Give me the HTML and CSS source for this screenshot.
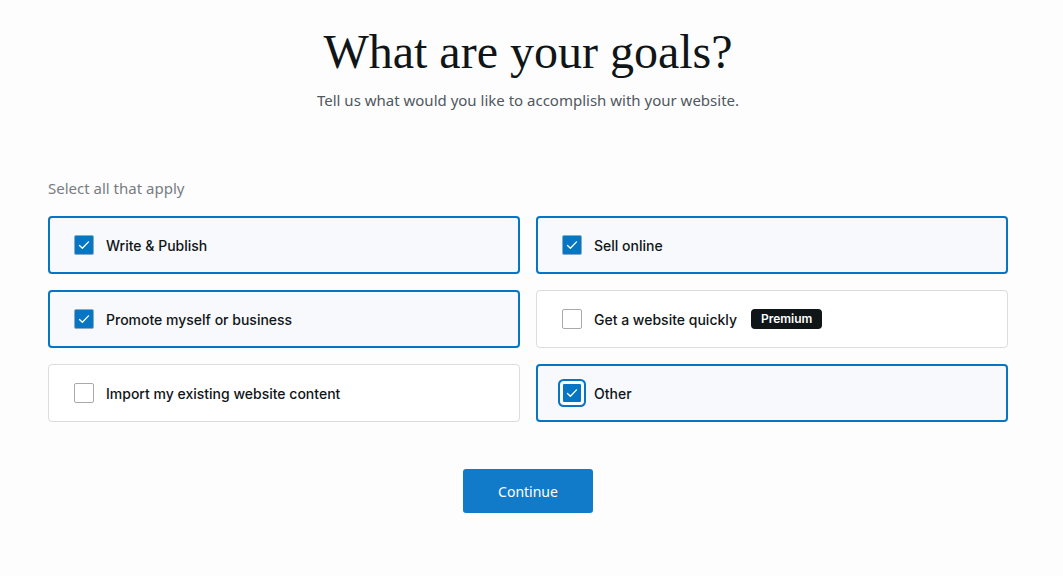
FILE: index.html
```html
<!DOCTYPE html>
<html lang="en">
<head>
<meta charset="utf-8">
<title>Goals</title>
<link rel="stylesheet" href="styles.css">
</head>
<body>
<main class="page">
  <header class="head">
    <h1 class="title">What are your goals?</h1>
    <p class="subtitle">Tell us what would you like to accomplish with your website.</p>
  </header>
  <section class="goals">
    <p class="hint">Select all that apply</p>
    <div class="grid">
      <label class="card selected">
        <span class="box checked"><svg viewBox="0 0 20 20"><path d="M5 10.5l3.2 3.2L15 6.5"/></svg></span>
        <span class="label">Write &amp; Publish</span>
      </label>
      <label class="card selected">
        <span class="box checked"><svg viewBox="0 0 20 20"><path d="M5 10.5l3.2 3.2L15 6.5"/></svg></span>
        <span class="label">Sell online</span>
      </label>
      <label class="card selected">
        <span class="box checked"><svg viewBox="0 0 20 20"><path d="M5 10.5l3.2 3.2L15 6.5"/></svg></span>
        <span class="label">Promote myself or business</span>
      </label>
      <label class="card">
        <span class="box"></span>
        <span class="label">Get a website quickly</span>
        <span class="badge">Premium</span>
      </label>
      <label class="card">
        <span class="box"></span>
        <span class="label">Import my existing website content</span>
      </label>
      <label class="card selected">
        <span class="box checked focus"><svg viewBox="0 0 20 20"><path d="M5 10.5l3.2 3.2L15 6.5"/></svg></span>
        <span class="label">Other</span>
      </label>
    </div>
  </section>
  <div class="actions">
    <button class="continue">Continue</button>
  </div>
</main>
</body>
</html>
```
FILE: styles.css
```css
* { box-sizing: border-box; }
html, body { margin: 0; padding: 0; }
body {
  background: #fdfdfd;
  font-family: Inter, "Noto Sans", sans-serif;
  color: #101517;
}
.page {
  width: 960px;
  margin: 0 48px;
  padding-top: 26px;
}
.head { text-align: center; }
.title {
  margin: 0;
  font-family: "Liberation Serif", serif;
  font-weight: 400;
  font-size: 48px;
  line-height: 52px;
  color: #101517;
}
.subtitle {
  margin: 10px 0 0;
  font-family: "Noto Sans", sans-serif;
  font-size: 15px;
  line-height: 24px;
  color: #50575e;
}
.goals { margin-top: 64px; }
.hint {
  margin: 0 0 16px;
  font-family: "Noto Sans", sans-serif;
  font-size: 15px;
  line-height: 24px;
  color: #787c82;
}
.grid {
  display: grid;
  grid-template-columns: 1fr 1fr;
  column-gap: 16px;
  row-gap: 16px;
}
.card {
  display: flex;
  align-items: center;
  height: 58px;
  padding: 0 24px 0 25px;
  border: 1px solid #dcdcde;
  border-radius: 4px;
  background: #fff;
  font-size: 14px;
  font-weight: 500;
  cursor: pointer;
}
.card.selected {
  border: 2px solid #0675c4;
  background: #f7f9fc;
  padding-left: 24px;
}
.box {
  width: 20px;
  height: 20px;
  flex: none;
  border: 1px solid #a7aaad;
  border-radius: 2px;
  background: #fff;
  margin-right: 12px;
  display: flex;
  align-items: center;
  justify-content: center;
}
.box.checked {
  background: #0675c4;
  border-color: #8aa9c2;
}
.box svg { width: 18px; height: 18px; }
.box svg path {
  fill: none;
  stroke: #fff;
  stroke-width: 1.5;
  stroke-linecap: round;
  stroke-linejoin: round;
}
.box.focus {
  box-shadow: 0 0 0 2px #fff, 0 0 0 4px #0675c4;
  border-color: #fff;
}
.label { color: #101517; }
.badge {
  margin-left: 14px;
  background: #101517;
  color: #fff;
  font-size: 12px;
  font-weight: 600;
  line-height: 20px;
  padding: 0 10px;
  border-radius: 4px;
}
.actions {
  display: flex;
  justify-content: center;
  margin-top: 47px;
}
.continue {
  width: 130px;
  height: 44px;
  border: none;
  border-radius: 3px;
  background: #117ac9;
  color: #fff;
  font-family: "Noto Sans", sans-serif;
  font-size: 14px;
}
```
